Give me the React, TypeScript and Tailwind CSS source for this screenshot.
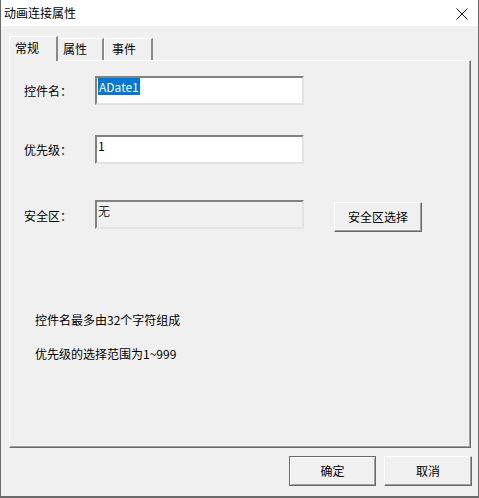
import React from "react";

const font = "font-['Noto_Sans_CJK_SC',sans-serif]";

const Field: React.FC<{ children?: React.ReactNode; disabled?: boolean }> = ({ children, disabled }) => (
  <div
    className={`w-[209px] h-[29px] border-2 border-t-[#828282] border-l-[#828282] border-r-[#e3e3e3] border-b-[#e3e3e3] pl-px pt-px text-[12px] leading-[16px] ${
      disabled ? "bg-[#f0f0f0] text-[#333]" : "bg-white"
    }`}
  >
    {children}
  </div>
);

const Button: React.FC<{ children: React.ReactNode; isDefault?: boolean; className?: string }> = ({
  children,
  isDefault,
  className = "",
}) => (
  <button
    className={`h-[30px] bg-[#f0f0f0] text-[12px] text-black border ${
      isDefault
        ? "border-[#696969] shadow-[inset_1px_1px_0_#ffffff,inset_-1px_-1px_0_#a0a0a0]"
        : "border-t-white border-l-white border-r-[#696969] border-b-[#696969] shadow-[inset_-1px_-1px_0_#a0a0a0]"
    } ${className}`}
  >
    {children}
  </button>
);

export default function App() {
  return (
    <div className={`w-[479px] h-[498px] bg-[#f0f0f0] border-l border-r border-b-2 border-[#6b6b6b] flex flex-col text-black ${font}`}>
      {/* title bar */}
      <div className="h-[26px] bg-white flex items-center justify-between pl-[3px] pr-[10px]">
        <span className="text-[12px] leading-none">动画连接属性</span>
        <svg width="12" height="12" viewBox="0 0 12 12" className="mt-[1px]">
          <path d="M0.5 0.5L11.5 11.5M11.5 0.5L0.5 11.5" stroke="#111" strokeWidth="1" />
        </svg>
      </div>

      {/* tabs */}
      <div className="flex items-end ml-[8px] mt-[10px] h-[24px] relative z-10">
        <div className="w-[49px] h-[25px] -mb-px bg-[#f0f0f0] border-t border-l border-t-white border-l-white border-r-2 border-r-[#8a8a8a] pl-[5px] pt-[3px] text-[12px] leading-[16px]">
          常规
        </div>
        <div className="w-[46px] h-[22px] border-t border-t-white border-r-2 border-r-[#8a8a8a] pl-[5px] pt-[2px] text-[12px] leading-[16px]">
          属性
        </div>
        <div className="w-[49px] h-[22px] border-t border-l border-t-white border-l-white border-r-2 border-r-[#8a8a8a] pl-[7px] pt-[2px] text-[12px] leading-[16px]">
          事件
        </div>
      </div>

      {/* panel */}
      <div className="ml-[8px] w-[462px] h-[388px] border border-t-white border-l-white border-r-[#696969] border-b-[#696969] shadow-[inset_-1px_-1px_0_#a0a0a0] flex flex-col pl-[14px] pt-[15px] text-[12px]">
        <div className="flex items-center">
          <span className="w-[71px]">控件名：</span>
          <Field>
            <span className="bg-[#0078d7] text-white px-px">ADate1</span>
          </Field>
        </div>
        <div className="flex items-center mt-[30px]">
          <span className="w-[71px]">优先级：</span>
          <Field>1</Field>
        </div>
        <div className="flex items-start mt-[36px]">
          <span className="w-[71px] mt-[7px]">安全区：</span>
          <Field disabled>无</Field>
          <Button className="w-[88px] ml-[30px] mt-[2px]">安全区选择</Button>
        </div>
        <div className="ml-[11px] mt-[80px] leading-[16px]">控件名最多由32个字符组成</div>
        <div className="ml-[11px] mt-[18px] leading-[16px]">优先级的选择范围为1~999</div>
      </div>

      {/* footer buttons */}
      <div className="flex justify-end gap-[8px] pr-[6px] mt-[8px]">
        <Button isDefault className="w-[87px]">确定</Button>
        <Button className="w-[88px]">取消</Button>
      </div>
    </div>
  );
}
